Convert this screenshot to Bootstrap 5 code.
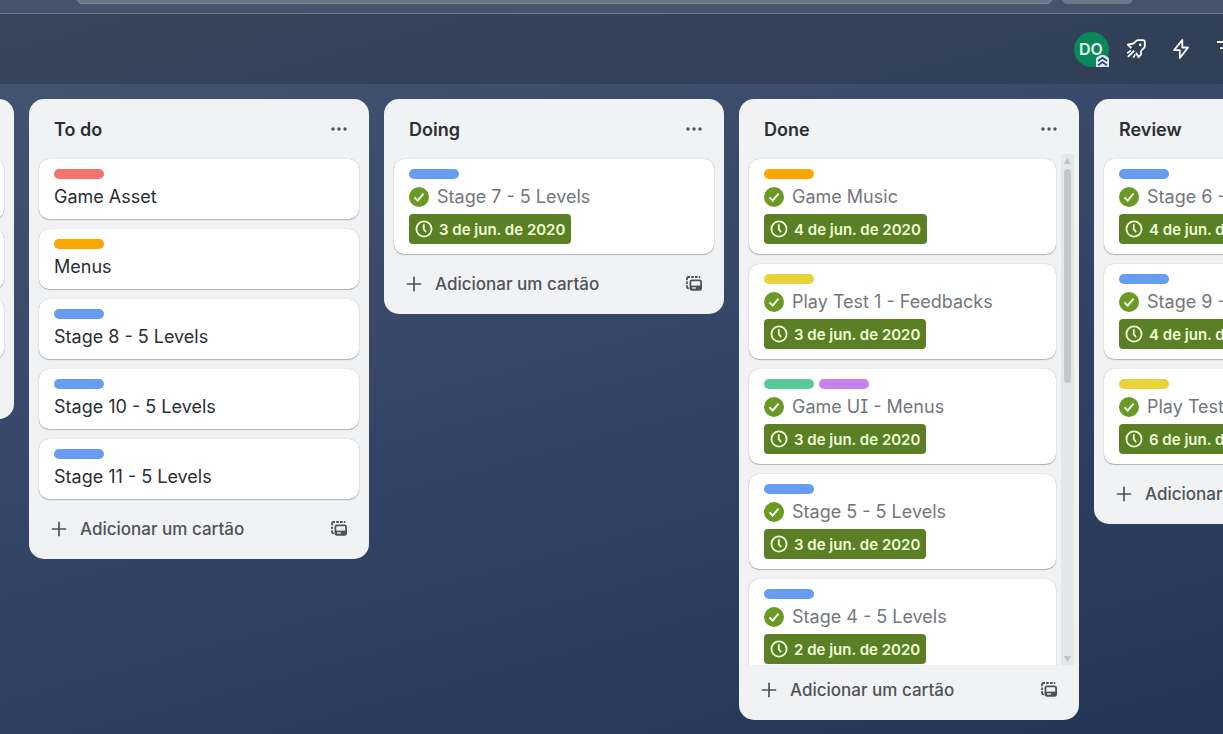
<!DOCTYPE html>
<html lang="pt-BR">
<head>
<meta charset="utf-8">
<meta name="viewport" content="width=device-width, initial-scale=1">
<title>Quadro</title>
<link href="https://cdn.jsdelivr.net/npm/bootstrap@5.3.0/dist/css/bootstrap.min.css" rel="stylesheet">
<style>
  body { font-family: Inter, "Liberation Sans", sans-serif; font-size: 18px; line-height: 25px; color: #2b2e33;
    font-feature-settings: "cv08" 1;
    background: linear-gradient(165deg, #46566f 0%, #3f4e6d 22%, #2f4264 62%, #233656 100%); }
  .top-strip { height: 14px; padding: 0 90px 9px 77px; gap: 10px; border-bottom: 1px solid #6d788c; background: #47526d; }
  .top-strip > * { height: 40px; border: 1px solid #7f8a99; background: #6b7588; border-radius: 5px; }
  .top-strip > button { width: 71px; border-color: #6b7588; }
  .board-bar { height: 70px; background: rgba(38, 48, 62, .42); }
  .bar-tools { gap: 5px; margin-right: -23px; color: #fff; }
  .tool { width: 40px; height: 40px; }
  .avatar { width: 35px; height: 35px; background: #0b875b; font-size: 16px; font-weight: 600; color: #e4f3ec; }
  .avatar-rank { right: 0; bottom: 0; }
  .board { gap: 15px; padding: 15px 15px 14px; min-height: 0; overflow-x: auto; scrollbar-width: none; }
  .board::-webkit-scrollbar { display: none; }
  .lane { width: 340px; max-height: 100%; background: #f1f2f4; border-radius: 15px; }
  .lane-head { height: 55px; padding: 6px 10px 0 25px; }
  .lane-head h2 { font-size: 18px; line-height: 25px; font-weight: 600; }
  .lane-body { min-height: 0; padding: 0 5px 0 10px; gap: 5px; }
  .lane-foot { height: 55px; padding: 0 10px 5px; color: #505258; }
  .stack { gap: 10px; padding: 5px 5px 5px 1px; margin-left: -1px; min-width: 0; }
  .lane-long .stack { padding-right: 1px; margin-right: -1px; }
  .tile { min-height: 60px; padding: 10px 15px; gap: 5px; border-radius: 10px; background: #fff;
    box-shadow: 0 1px 1px rgba(30, 31, 33, .28), 0 0 1px rgba(30, 31, 33, .35); }
  .tile.is-done { color: #74767c; }
  .tags { gap: 5px; }
  .tag { width: 50px; height: 10px; border-radius: 5px; }
  .blue { background: #669df1; } .red { background: #f1756d; } .orange { background: #fca700; }
  .yellow { background: #ead23a; } .green { background: #56cb97; } .purple { background: #c681ec; }
  .due { height: 30px; padding: 0 6px; gap: 6px; border-radius: 4px; background: #5b7f24; color: #efffd6;
    font-size: 15px; font-weight: 600; }
  .icon-btn { width: 40px; height: 40px; color: #505258; }
  .icon-btn svg { margin-bottom: 2px; }
  .add-btn { gap: 13px; color: #505258; font-size: 17px; font-weight: 500; }
  .rail { width: 13px; background: #e4e6e9; padding: 4px 3px 3px; color: #bfc1c5; }
  .rail-thumb { border-radius: 4px; background: #c4c6c9; }
</style>
</head>
<body class="vh-100 d-flex flex-column overflow-hidden">

<svg class="d-none">
  <symbol id="dots" viewBox="0 0 16 4"><g fill="currentColor"><circle cx="2" cy="2" r="1.700"/><circle cx="8" cy="2" r="1.700"/><circle cx="14" cy="2" r="1.700"/></g></symbol>
  <symbol id="plus" viewBox="0 0 16 16"><path d="M8 .8v14.400M.8 8h14.400" stroke="currentColor" stroke-width="1.700"/></symbol>
  <symbol id="template" viewBox="0 0 16 15"><g fill="none" stroke="currentColor" stroke-width="1.800">
    <path d="M1 4.200V2.600Q1 1 2.600 1H4M5.200 1h2.600M9 1h2.600M12.800 1h1.400M1 5.400v2.600M1 9.200v1.600Q1 12.400 2.800 12.400"/>
    <rect x="4.400" y="4.400" width="10.700" height="9.500" rx="1.500"/></g><path d="M4.600 9.600h10.500v4H4.600z" fill="currentColor"/><path d="M6 11.300h4v1.300H6z" fill="#f1f2f4"/></symbol>
  <symbol id="check" viewBox="0 0 20 20"><circle cx="10" cy="10" r="10" fill="#6a9a23"/><path d="M5.500 10.400l3.200 3.200 5.800-7" fill="none" stroke="#fff" stroke-width="2"/></symbol>
  <symbol id="clock" viewBox="0 0 18 18"><g fill="none" stroke="currentColor" stroke-width="1.800"><circle cx="9" cy="9" r="7.600"/><path d="M8.800 4.300V9.300l2.300 2.800"/></g></symbol>
</svg>

<header class="top-strip d-flex align-items-end flex-shrink-0 overflow-hidden">
  <input class="flex-grow-1" type="search" aria-label="Buscar">
  <button type="button" aria-label="Criar"></button>
</header>

<nav class="board-bar d-flex align-items-center justify-content-end flex-shrink-0 overflow-hidden" aria-label="Ferramentas do quadro">
  <div class="bar-tools d-flex align-items-center">
    <button class="tool btn p-0 border-0 d-flex align-items-center justify-content-center" type="button">
      <span class="avatar rounded-circle d-flex align-items-center justify-content-center position-relative">DO
        <svg class="avatar-rank position-absolute" width="13" height="12" viewBox="0 0 13 12"><path d="M0 12V4Q0 2 2 1.500L5 0h3l3 1.500Q13 2 13 4v8z" fill="#dde6f5"/><path d="M2 6l4.500-3.200L11 6M2 10.300l4.500-3.200L11 10.300" fill="none" stroke="#22406f" stroke-width="1.600"/></svg>
      </span>
    </button>
    <button class="tool btn p-0 border-0 text-white d-flex align-items-center justify-content-center" type="button" aria-label="Power-Ups">
      <svg width="20" height="20" viewBox="0 0 20 20" fill="none" stroke="currentColor" stroke-width="1.800" stroke-linejoin="round"><path d="M5.400 9.200L1.800 5.600 7.400 4.500 10.600 1.600Q11.200 1.200 12 1.200H16.800Q18.800 1.200 18.800 3.200V7.200Q18.800 8 18.200 8.600L15 12V15.400L12.600 18.200 10 13.600"/><path d="M8.300 11.700L1.900 17.900M4.900 11.400L1.300 14.300M9.200 15.400L7.300 18.600"/><circle cx="14.300" cy="5.900" r="1.300" fill="currentColor" stroke="none"/></svg>
    </button>
    <button class="tool btn p-0 border-0 text-white d-flex align-items-center justify-content-center" type="button" aria-label="Automação">
      <svg width="20" height="20" viewBox="0 0 20 20" fill="none" stroke="currentColor" stroke-width="1.800" stroke-linejoin="round"><path d="M11.300 1L3 11.200H8.800V19L17 8.500H11.300z"/></svg>
    </button>
    <button class="tool btn p-0 border-0 text-white d-flex align-items-center justify-content-center" type="button" aria-label="Filtros">
      <svg width="20" height="20" viewBox="0 0 20 20" stroke="currentColor" stroke-width="1.800"><path d="M1 3h18M4 9.200h12M7 15.400h6"/></svg>
    </button>
  </div>
</nav>

<main class="board d-flex align-items-start flex-grow-1" id="board">

  <section class="lane d-flex flex-column flex-shrink-0">
    <div class="lane-head flex-shrink-0"></div>
    <div class="lane-body d-flex"><div class="stack flex-grow-1 d-flex flex-column">
      <article class="tile"></article><article class="tile"></article><article class="tile"></article>
    </div></div>
    <div class="lane-foot flex-shrink-0"></div>
  </section>

  <section class="lane d-flex flex-column flex-shrink-0">
    <div class="lane-head d-flex align-items-center justify-content-between flex-shrink-0">
      <h2 class="m-0">To do</h2>
      <button class="icon-btn btn p-0 border-0" type="button" aria-label="Ações da lista"><svg class="d-block mx-auto" width="16" height="4"><use href="#dots"/></svg></button>
    </div>
    <div class="lane-body d-flex"><div class="stack flex-grow-1 d-flex flex-column">
      <article class="tile d-flex flex-column"><span class="tag red"></span><span>Game Asset</span></article>
      <article class="tile d-flex flex-column"><span class="tag orange"></span><span>Menus</span></article>
      <article class="tile d-flex flex-column"><span class="tag blue"></span><span>Stage 8 - 5 Levels</span></article>
      <article class="tile d-flex flex-column"><span class="tag blue"></span><span>Stage 10 - 5 Levels</span></article>
      <article class="tile d-flex flex-column"><span class="tag blue"></span><span>Stage 11 - 5 Levels</span></article>
    </div></div>
    <div class="lane-foot d-flex align-items-center justify-content-between flex-shrink-0">
      <button class="add-btn bg-transparent border-0 p-0 ps-2 d-flex align-items-center" type="button"><svg class="ms-1" width="16" height="16"><use href="#plus"/></svg>Adicionar um cartão</button>
      <button class="icon-btn btn p-0 border-0" type="button" aria-label="Criar a partir de modelo"><svg class="d-block mx-auto" width="16" height="15"><use href="#template"/></svg></button>
    </div>
  </section>

  <section class="lane d-flex flex-column flex-shrink-0">
    <div class="lane-head d-flex align-items-center justify-content-between flex-shrink-0">
      <h2 class="m-0">Doing</h2>
      <button class="icon-btn btn p-0 border-0" type="button" aria-label="Ações da lista"><svg class="d-block mx-auto" width="16" height="4"><use href="#dots"/></svg></button>
    </div>
    <div class="lane-body d-flex"><div class="stack flex-grow-1 d-flex flex-column">
      <article class="tile is-done d-flex flex-column align-items-start"><span class="tag blue"></span>
        <span class="d-flex align-items-center gap-2"><svg width="20" height="20"><use href="#check"/></svg>Stage 7 - 5 Levels</span>
        <span class="due d-flex align-items-center"><svg width="18" height="18"><use href="#clock"/></svg>3 de jun. de 2020</span></article>
    </div></div>
    <div class="lane-foot d-flex align-items-center justify-content-between flex-shrink-0">
      <button class="add-btn bg-transparent border-0 p-0 ps-2 d-flex align-items-center" type="button"><svg class="ms-1" width="16" height="16"><use href="#plus"/></svg>Adicionar um cartão</button>
      <button class="icon-btn btn p-0 border-0" type="button" aria-label="Criar a partir de modelo"><svg class="d-block mx-auto" width="16" height="15"><use href="#template"/></svg></button>
    </div>
  </section>

  <section class="lane lane-long d-flex flex-column flex-shrink-0">
    <div class="lane-head d-flex align-items-center justify-content-between flex-shrink-0">
      <h2 class="m-0">Done</h2>
      <button class="icon-btn btn p-0 border-0" type="button" aria-label="Ações da lista"><svg class="d-block mx-auto" width="16" height="4"><use href="#dots"/></svg></button>
    </div>
    <div class="lane-body d-flex">
      <div class="stack flex-grow-1 d-flex flex-column overflow-hidden">
        <article class="tile is-done d-flex flex-column align-items-start flex-shrink-0"><span class="tag orange"></span>
          <span class="d-flex align-items-center gap-2"><svg width="20" height="20"><use href="#check"/></svg>Game Music</span>
          <span class="due d-flex align-items-center"><svg width="18" height="18"><use href="#clock"/></svg>4 de jun. de 2020</span></article>
        <article class="tile is-done d-flex flex-column align-items-start flex-shrink-0"><span class="tag yellow"></span>
          <span class="d-flex align-items-center gap-2"><svg width="20" height="20"><use href="#check"/></svg>Play Test 1 - Feedbacks</span>
          <span class="due d-flex align-items-center"><svg width="18" height="18"><use href="#clock"/></svg>3 de jun. de 2020</span></article>
        <article class="tile is-done d-flex flex-column align-items-start flex-shrink-0"><span class="tags d-flex"><span class="tag green"></span><span class="tag purple"></span></span>
          <span class="d-flex align-items-center gap-2"><svg width="20" height="20"><use href="#check"/></svg>Game UI - Menus</span>
          <span class="due d-flex align-items-center"><svg width="18" height="18"><use href="#clock"/></svg>3 de jun. de 2020</span></article>
        <article class="tile is-done d-flex flex-column align-items-start flex-shrink-0"><span class="tag blue"></span>
          <span class="d-flex align-items-center gap-2"><svg width="20" height="20"><use href="#check"/></svg>Stage 5 - 5 Levels</span>
          <span class="due d-flex align-items-center"><svg width="18" height="18"><use href="#clock"/></svg>3 de jun. de 2020</span></article>
        <article class="tile is-done d-flex flex-column align-items-start flex-shrink-0"><span class="tag blue"></span>
          <span class="d-flex align-items-center gap-2"><svg width="20" height="20"><use href="#check"/></svg>Stage 4 - 5 Levels</span>
          <span class="due d-flex align-items-center"><svg width="18" height="18"><use href="#clock"/></svg>2 de jun. de 2020</span></article>
      </div>
      <div class="rail d-flex flex-column flex-shrink-0">
        <svg class="mb-1" width="7" height="7" viewBox="0 0 7 7"><path d="M3.500 0L7 6H0z" fill="currentColor"/></svg>
        <div class="flex-grow-1"><div class="rail-thumb" style="height:44%"></div></div>
        <svg width="7" height="7" viewBox="0 0 7 7"><path d="M3.500 7L7 1H0z" fill="currentColor"/></svg>
      </div>
    </div>
    <div class="lane-foot d-flex align-items-center justify-content-between flex-shrink-0">
      <button class="add-btn bg-transparent border-0 p-0 ps-2 d-flex align-items-center" type="button"><svg class="ms-1" width="16" height="16"><use href="#plus"/></svg>Adicionar um cartão</button>
      <button class="icon-btn btn p-0 border-0" type="button" aria-label="Criar a partir de modelo"><svg class="d-block mx-auto" width="16" height="15"><use href="#template"/></svg></button>
    </div>
  </section>

  <section class="lane d-flex flex-column flex-shrink-0">
    <div class="lane-head d-flex align-items-center justify-content-between flex-shrink-0"><h2 class="m-0">Review</h2></div>
    <div class="lane-body d-flex"><div class="stack flex-grow-1 d-flex flex-column">
      <article class="tile is-done d-flex flex-column align-items-start"><span class="tag blue"></span>
        <span class="d-flex align-items-center gap-2"><svg width="20" height="20"><use href="#check"/></svg>Stage 6 - 5 Levels</span>
        <span class="due d-flex align-items-center"><svg width="18" height="18"><use href="#clock"/></svg>4 de jun. de 2020</span></article>
      <article class="tile is-done d-flex flex-column align-items-start"><span class="tag blue"></span>
        <span class="d-flex align-items-center gap-2"><svg width="20" height="20"><use href="#check"/></svg>Stage 9 - 5 Levels</span>
        <span class="due d-flex align-items-center"><svg width="18" height="18"><use href="#clock"/></svg>4 de jun. de 2020</span></article>
      <article class="tile is-done d-flex flex-column align-items-start"><span class="tag yellow"></span>
        <span class="d-flex align-items-center gap-2"><svg width="20" height="20"><use href="#check"/></svg>Play Test 2</span>
        <span class="due d-flex align-items-center"><svg width="18" height="18"><use href="#clock"/></svg>6 de jun. de 2020</span></article>
    </div></div>
    <div class="lane-foot d-flex align-items-center justify-content-between flex-shrink-0">
      <button class="add-btn bg-transparent border-0 p-0 ps-2 d-flex align-items-center" type="button"><svg class="ms-1" width="16" height="16"><use href="#plus"/></svg>Adicionar um cartão</button>
    </div>
  </section>
</main>

<script src="https://cdn.jsdelivr.net/npm/bootstrap@5.3.0/dist/js/bootstrap.bundle.min.js"></script>
<script>
  // Open the board scrolled to its second list.
  document.getElementById('board').scrollLeft = 341;
</script>
</body>
</html>
